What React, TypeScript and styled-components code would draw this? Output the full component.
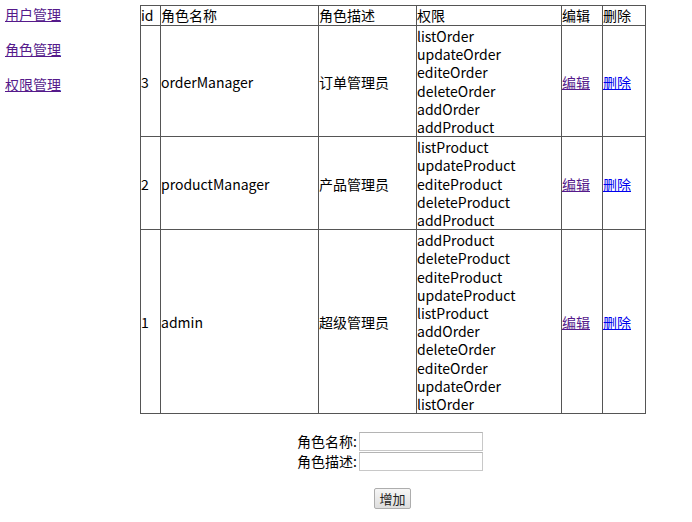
import React from "react";
import styled, { createGlobalStyle } from "styled-components";

const Global = createGlobalStyle`
  html, body {
    margin: 0;
    padding: 0;
    background: #fff;
    color: #000;
    font-family: "Noto Sans CJK SC", "Noto Sans", sans-serif;
    font-size: 14px;
  }
`;

const Page = styled.div`
  display: flex;
  align-items: flex-start;
`;

const Nav = styled.nav`
  width: 140px;
  flex: none;
  display: flex;
  flex-direction: column;
  gap: 14px;
  padding: 4px 0 0 5px;
  box-sizing: border-box;
`;

const NavLink = styled.a`
  color: #551a8b;
  text-decoration: underline;
  line-height: 21px;
`;

const Main = styled.main`
  width: 506px;
  padding-top: 5px;
  display: flex;
  flex-direction: column;
  align-items: center;
`;

const Table = styled.table`
  width: 506px;
  border-collapse: collapse;
  border: 1px solid #777;
  table-layout: fixed;
  align-self: flex-start;
`;

const Cell = styled.td<{ $w?: number }>`
  border: 1px solid #555;
  padding: 1px 0 0;
  line-height: 18.2px;
  vertical-align: middle;
  text-align: left;
  font-weight: normal;
  white-space: nowrap;
  ${(p) => (p.$w ? `width: ${p.$w}px;` : "")}
`;

const HeadCell = styled(Cell).attrs({ as: "th" })`
  padding: 0;
  line-height: 19px;
`;

const Perms = styled.div`
  display: flex;
  flex-direction: column;
`;

const RowLink = styled.a<{ $visited?: boolean }>`
  color: ${(p) => (p.$visited ? "#551a8b" : "#0000ee")};
  text-decoration: underline;
`;

const Form = styled.form`
  margin-top: 18px;
  margin-right: 6px;
  display: grid;
  grid-template-columns: auto auto;
  row-gap: 1px;
  column-gap: 2px;
  align-items: center;
`;

const Label = styled.label`
  text-align: right;
  line-height: 19px;
`;

const Input = styled.input`
  width: 124px;
  height: 19px;
  box-sizing: border-box;
  border: 1px solid #c8c8c8;
  border-top-color: #b4b4b4;
  padding: 0 2px;
  font: inherit;
`;

const Button = styled.button`
  margin-top: 17px;
  margin-right: 1px;
  height: 21px;
  padding: 0 4px;
  font: 13px "Noto Sans CJK SC", sans-serif;
  color: #222;
  border: 1px solid #adadad;
  border-radius: 2px;
  background: linear-gradient(#f6f6f6, #dedede);
`;

const roles = [
  {
    id: 3,
    name: "orderManager",
    desc: "订单管理员",
    perms: ["listOrder", "updateOrder", "editeOrder", "deleteOrder", "addOrder", "addProduct"],
  },
  {
    id: 2,
    name: "productManager",
    desc: "产品管理员",
    perms: ["listProduct", "updateProduct", "editeProduct", "deleteProduct", "addProduct"],
  },
  {
    id: 1,
    name: "admin",
    desc: "超级管理员",
    perms: [
      "addProduct",
      "deleteProduct",
      "editeProduct",
      "updateProduct",
      "listProduct",
      "addOrder",
      "deleteOrder",
      "editeOrder",
      "updateOrder",
      "listOrder",
    ],
  },
];

export default function App() {
  return (
    <Page>
      <Global />
      <Nav>
        <NavLink href="#">用户管理</NavLink>
        <NavLink href="#">角色管理</NavLink>
        <NavLink href="#">权限管理</NavLink>
      </Nav>
      <Main>
        <Table>
          <thead>
            <tr>
              <HeadCell $w={19}>id</HeadCell>
              <HeadCell $w={157}>角色名称</HeadCell>
              <HeadCell $w={97}>角色描述</HeadCell>
              <HeadCell $w={144}>权限</HeadCell>
              <HeadCell $w={40}>编辑</HeadCell>
              <HeadCell>删除</HeadCell>
            </tr>
          </thead>
          <tbody>
            {roles.map((r) => (
              <tr key={r.id}>
                <Cell>{r.id}</Cell>
                <Cell>{r.name}</Cell>
                <Cell>{r.desc}</Cell>
                <Cell>
                  <Perms>
                    {r.perms.map((p, i) => (
                      <span key={i}>{p}</span>
                    ))}
                  </Perms>
                </Cell>
                <Cell>
                  <RowLink href="#" $visited>编辑</RowLink>
                </Cell>
                <Cell>
                  <RowLink href="#">删除</RowLink>
                </Cell>
              </tr>
            ))}
          </tbody>
        </Table>
        <Form onSubmit={(e) => e.preventDefault()}>
          <Label>角色名称:</Label>
          <Input type="text" />
          <Label>角色描述:</Label>
          <Input type="text" />
        </Form>
        <Button type="button">增加</Button>
      </Main>
    </Page>
  );
}
